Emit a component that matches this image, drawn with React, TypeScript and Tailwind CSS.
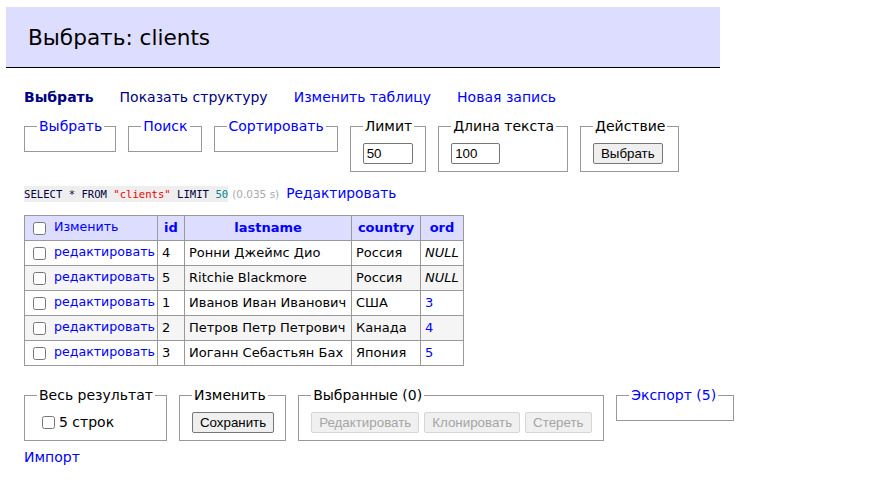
import React from 'react';

const rows = [
  { id: 4, lastname: 'Ронни Джеймс Дио', country: 'Россия', ord: null },
  { id: 5, lastname: 'Ritchie Blackmore', country: 'Россия', ord: null },
  { id: 1, lastname: 'Иванов Иван Иванович', country: 'США', ord: 3 },
  { id: 2, lastname: 'Петров Петр Петрович', country: 'Канада', ord: 4 },
  { id: 3, lastname: 'Иоганн Себастьян Бах', country: 'Япония', ord: 5 },
];

const Box: React.FC<{ legend: React.ReactNode; children?: React.ReactNode; className?: string }> = ({
  legend,
  children,
  className = '',
}) => (
  <fieldset className={`border border-[#999] pl-[12px] pr-[11px] pt-[8px] pb-[7px] ${className}`}>
    <legend className="px-[2px] leading-[17px] whitespace-nowrap">{legend}</legend>
    {children}
  </fieldset>
);

const Btn: React.FC<{ children: React.ReactNode; disabled?: boolean }> = ({ children, disabled }) => (
  <button
    disabled={disabled}
    className={`h-[21px] px-[7px] rounded-[2px] border text-[13.33px] font-['Liberation_Sans',sans-serif] leading-none ${
      disabled ? 'border-[#d6d6d6] bg-[#f0f0f0] text-[#a5a5a5]' : 'border-[#767676] bg-[#efefef] text-black'
    }`}
  >
    {children}
  </button>
);

const Check: React.FC = () => (
  <input type="checkbox" className="w-[13px] h-[13px] m-0 align-middle shrink-0" />
);

const inputCls =
  "block h-[21px] border border-[#767676] rounded-[2px] px-[3px] text-[13.33px] font-['Liberation_Sans',sans-serif]";

const App: React.FC = () => {
  return (
    <div className="min-h-[503px] bg-white pt-[7px] pl-[6px] text-[14px] text-black font-['DejaVu_Sans',Verdana,sans-serif]">
      <h2 className="w-[714px] h-[61px] bg-[#ddf] border-b border-black pl-[22px] pt-[2px] flex items-center text-[21.6px] font-normal">
        Выбрать: clients
      </h2>

      <div className="pl-[18px]">
        <nav className="mt-[20px] flex gap-[26px] leading-[18px] text-[14px]">
          <a className="font-bold text-[#000080]">Выбрать</a>
          <a className="text-[#000080]">Показать структуру</a>
          <a className="text-[#0000ff]">Изменить таблицу</a>
          <a className="text-[#0000ff]">Новая запись</a>
        </nav>

        <form className="mt-[12px] flex items-start gap-[12px]">
          <Box legend={<a className="text-[#0000ff]">Выбрать</a>} className="pb-[8px]" />
          <Box legend={<a className="text-[#0000ff]">Поиск</a>} className="pb-[8px]" />
          <Box legend={<a className="text-[#0000ff]">Сортировать</a>} className="pb-[8px]" />
          <Box legend="Лимит">
            <input defaultValue="50" className={`w-[50px] ${inputCls}`} />
          </Box>
          <Box legend="Длина текста">
            <input defaultValue="100" className={`w-[49px] ${inputCls}`} />
          </Box>
          <Box legend="Действие">
            <Btn>Выбрать</Btn>
          </Box>
        </form>

        <p className="mt-[13px] flex items-baseline leading-[16px]">
          <code className="bg-[#eee] text-[10.6px] font-['DejaVu_Sans_Mono',monospace] text-[#000040]">
            SELECT * FROM <span className="text-[#e00]">"clients"</span> LIMIT{' '}
            <span className="text-[#088]">50</span>
          </code>
          <span className="ml-[4px] text-[10.5px] text-[#aaa]">(0.035 s)</span>
          <a className="ml-[7px] text-[#0000ff] text-[13.8px]">Редактировать</a>
        </p>

        <table className="mt-[13px] border-collapse text-[13px] leading-[16px]">
          <thead>
            <tr className="h-[25px] bg-[#ddf]">
              <td className="w-[133px] border border-[#999] pl-[8px] pr-[2px]">
                <span className="flex items-center gap-[8px]">
                  <Check />
                  <a className="text-[#0000ff] text-[12.6px] -mt-[2px]">Изменить</a>
                </span>
              </td>
              <th className="w-[27px] border border-[#999] text-[#0000ff] font-bold">id</th>
              <th className="w-[167px] border border-[#999] text-[#0000ff] font-bold">lastname</th>
              <th className="w-[69px] border border-[#999] text-[#0000ff] font-bold">country</th>
              <th className="w-[43px] border border-[#999] text-[#0000ff] font-bold">ord</th>
            </tr>
          </thead>
          <tbody>
            {rows.map((r, i) => (
              <tr key={r.id} className={`h-[25px] ${i % 2 === 1 ? 'bg-[#f5f5f5]' : 'bg-white'}`}>
                <td className="border border-[#999] pl-[8px] pr-[2px]">
                  <span className="flex items-center gap-[8px] whitespace-nowrap">
                    <Check />
                    <a className="text-[#0000ff] text-[12.6px] -mt-[2px]">редактировать</a>
                  </span>
                </td>
                <td className="border border-[#999] px-[4px]">{r.id}</td>
                <td className="border border-[#999] px-[4px] whitespace-nowrap">{r.lastname}</td>
                <td className="border border-[#999] px-[4px]">{r.country}</td>
                <td className="border border-[#999] px-[4px]">
                  {r.ord === null ? <i>NULL</i> : <a className="text-[#0000ff]">{r.ord}</a>}
                </td>
              </tr>
            ))}
          </tbody>
        </table>

        <div className="mt-[21px] flex items-start gap-[12px]">
          <Box legend="Весь результат">
            <label className="flex items-center gap-[4px] h-[21px] pl-[5px]">
              <Check />
              5 строк
            </label>
          </Box>
          <Box legend="Изменить">
            <Btn>Сохранить</Btn>
          </Box>
          <Box legend="Выбранные (0)" className="w-[306px]">
            <div className="flex gap-[5px]">
              <Btn disabled>Редактировать</Btn>
              <Btn disabled>Клонировать</Btn>
              <Btn disabled>Стереть</Btn>
            </div>
          </Box>
          <Box legend={<a className="text-[#0000ff]">Экспорт (5)</a>} className="w-[118px] pb-[8px]" />
        </div>

        <p className="mt-[7px] leading-[18px]">
          <a className="text-[#0000ff]">Импорт</a>
        </p>
      </div>
    </div>
  );
};

export default App;
